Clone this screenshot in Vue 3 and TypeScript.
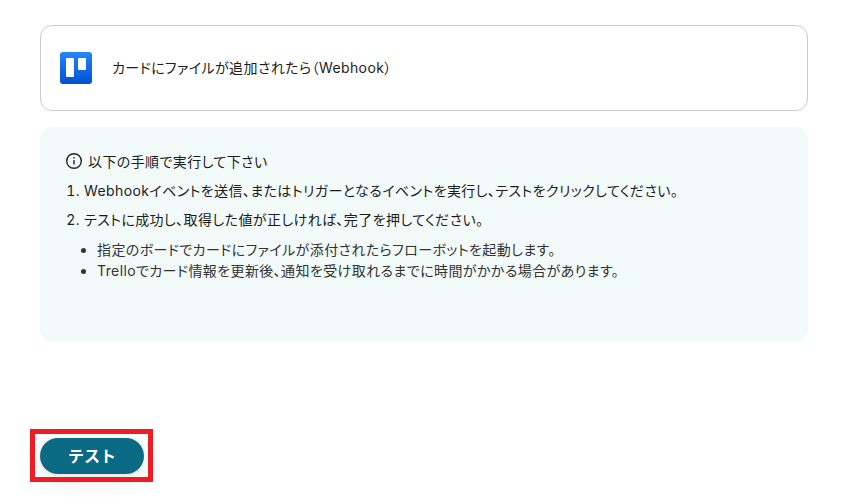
<script setup lang="ts">
const steps: string[] = [
  "Webhookイベントを送信、またはトリガーとなるイベントを実行し、テストをクリックしてください。",
  "テストに成功し、取得した値が正しければ、完了を押してください。",
];
const notes: string[] = [
  "指定のボードでカードにファイルが添付されたらフローボットを起動します。",
  "Trelloでカード情報を更新後、通知を受け取れるまでに時間がかかる場合があります。",
];
</script>

<template>
  <div class="page">
    <div class="app-card">
      <svg class="logo" width="32" height="32" viewBox="0 0 32 32">
        <defs>
          <linearGradient id="tr" x1="0" y1="0" x2="0" y2="1">
            <stop offset="0" stop-color="#2684ff" />
            <stop offset="1" stop-color="#0052cc" />
          </linearGradient>
        </defs>
        <rect width="32" height="32" rx="3" fill="url(#tr)" />
        <rect x="6" y="6" width="8" height="19" rx="1" fill="#fff" />
        <rect x="18" y="6" width="8" height="12" rx="1" fill="#fff" />
      </svg>
      <span class="app-title">カードにファイルが追加されたら（Webhook）</span>
    </div>

    <div class="info">
      <div class="info-head">
        <svg width="18" height="18" viewBox="0 0 18 18" fill="none" stroke="#222" stroke-width="1.4">
          <circle cx="9" cy="9" r="7.3" />
          <path d="M9 8v4.6" />
          <path d="M9 5v1.4" />
        </svg>
        <span>以下の手順で実行して下さい</span>
      </div>
      <ol class="steps">
        <li v-for="s in steps" :key="s">{{ s }}</li>
      </ol>
      <ul class="notes">
        <li v-for="n in notes" :key="n">{{ n }}</li>
      </ul>
    </div>

    <div class="actions">
      <button class="test-btn">テスト</button>
      <span class="highlight"></span>
    </div>
  </div>
</template>

<style scoped>
.page {
  width: 841px;
  height: 501px;
  box-sizing: border-box;
  padding: 25px 33px 0 40px;
  background: #fff;
  font-family: Inter, "Noto Sans CJK JP", sans-serif;
  font-feature-settings: "palt";
  letter-spacing: 0.4px;
  color: #1c1c1c;
  overflow: hidden;
}
.app-card {
  display: flex;
  align-items: center;
  gap: 20px;
  height: 86px;
  box-sizing: border-box;
  padding: 0 19px;
  border: 1px solid #c8cccf;
  border-radius: 12px;
}
.logo {
  flex: none;
}
.app-title {
  font-size: 14px;
  margin-top: -2px;
}
.info {
  margin-top: 16px;
  height: 215px;
  box-sizing: border-box;
  padding: 24px 25px;
  background: #f2fafa;
  border-radius: 12px;
  font-size: 14px;
}
.info-head {
  display: flex;
  align-items: center;
  gap: 5px;
}
.steps {
  margin: 10px 0 0;
  padding-left: 19px;
}
.steps li {
  line-height: 20px;
  margin-bottom: 9px;
}
.notes {
  margin: 0;
  padding-left: 32px;
  color: #333;
}
.notes li {
  line-height: 21px;
}
.actions {
  position: relative;
  margin-top: 96px;
  width: 104px;
}
.test-btn {
  display: block;
  width: 104px;
  height: 36px;
  padding: 0 0 2px;
  border: none;
  border-radius: 18px;
  background: #0a6a84;
  color: #fff;
  font: 700 16px Inter, "Noto Sans CJK JP", sans-serif;
  box-shadow: 0 6px 20px rgba(40, 70, 90, 0.14);
}
.highlight {
  position: absolute;
  left: -10px;
  top: -9px;
  width: 123px;
  height: 53px;
  box-sizing: border-box;
  border: 5px solid #ee1c25;
}
</style>
